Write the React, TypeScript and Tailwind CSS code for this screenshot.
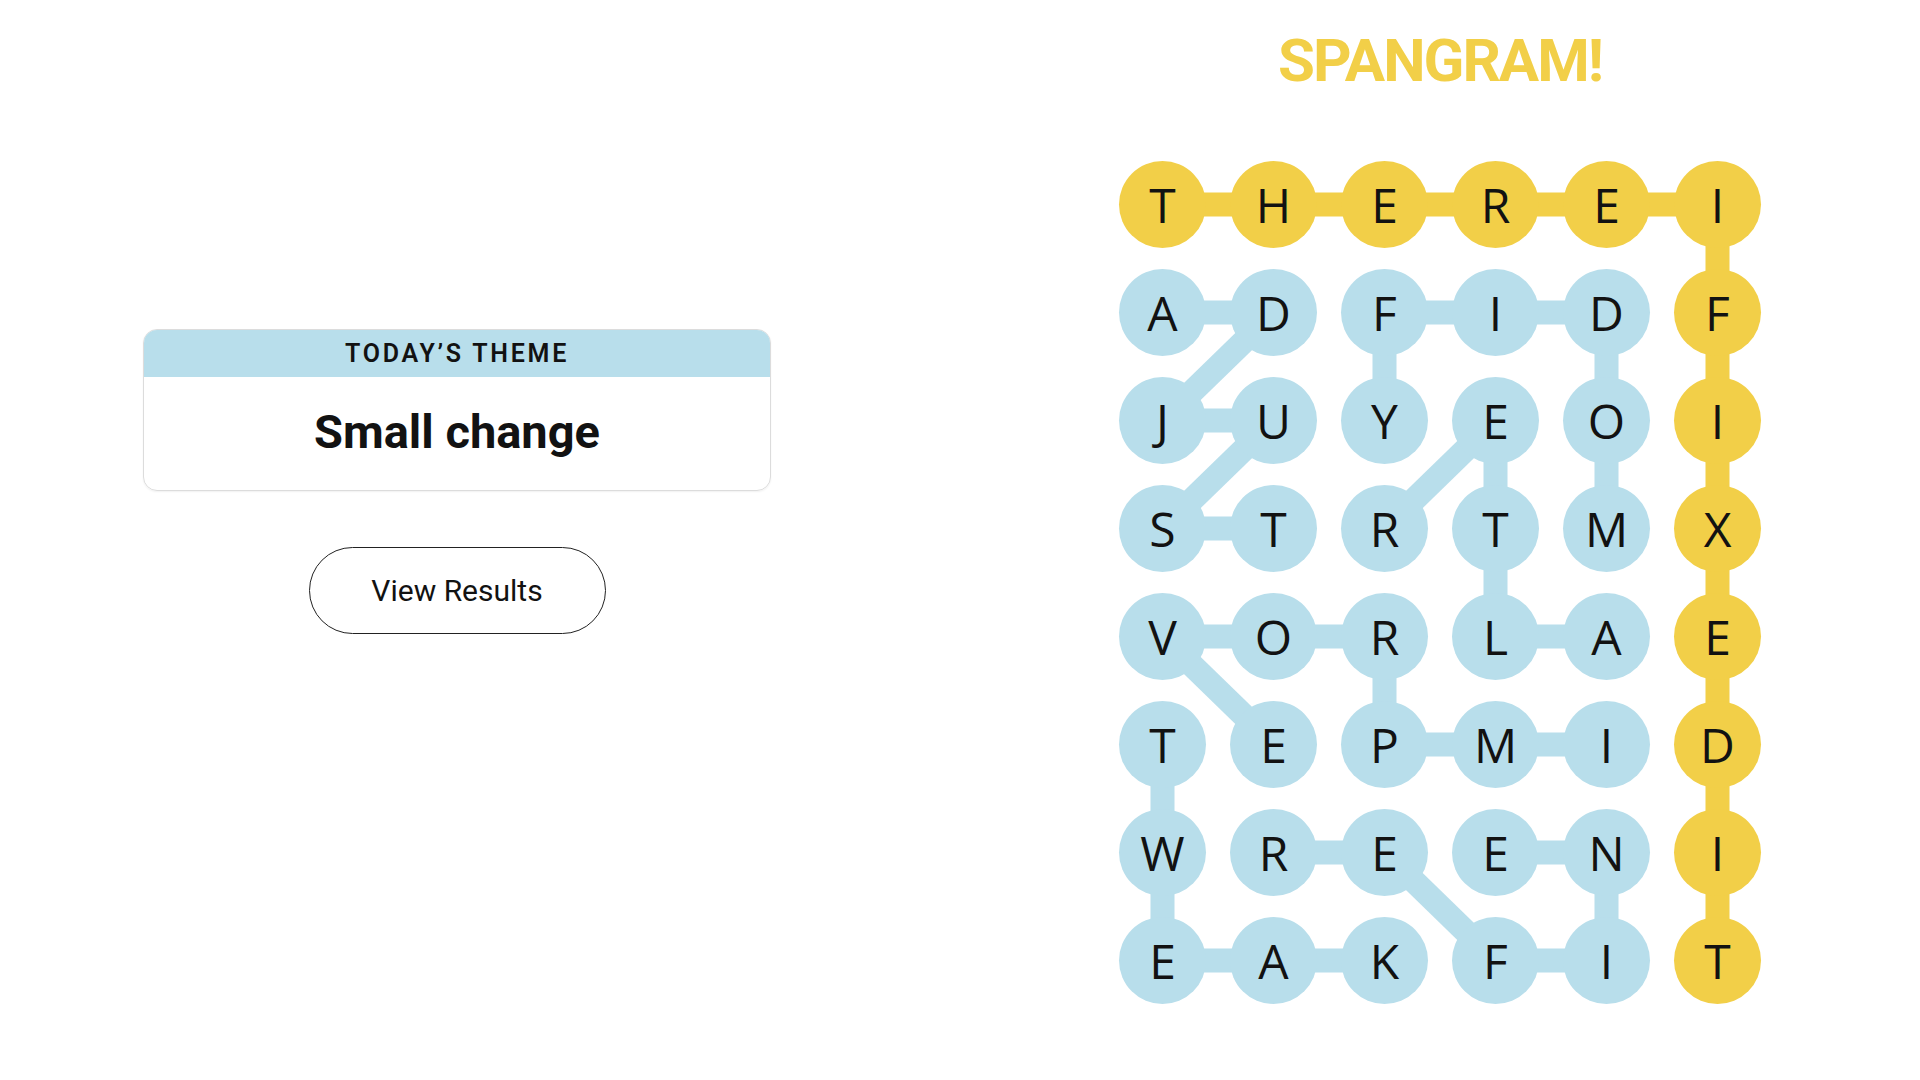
import React from 'react'

const ROWS = ['THEREI', 'ADFIDF', 'JUYEOI', 'STRTMX', 'VORLAE', 'TEPMID', 'WREENI', 'EAKFIT']

const CELL = 87
const PITCH_X = 111
const PITCH_Y = 108

const BLUE = '#b8deeb'
const YELLOW = '#f2cf48'

// [r1, c1, r2, c2]
const blueLinks: number[][] = [
  // adjust
  [1, 0, 1, 1], [1, 1, 2, 0], [2, 0, 2, 1], [2, 1, 3, 0], [3, 0, 3, 1],
  // modify
  [3, 4, 2, 4], [2, 4, 1, 4], [1, 4, 1, 3], [1, 3, 1, 2], [1, 2, 2, 2],
  // alter
  [4, 4, 4, 3], [4, 3, 3, 3], [3, 3, 2, 3], [2, 3, 3, 2],
  // tweak
  [5, 0, 6, 0], [6, 0, 7, 0], [7, 0, 7, 1], [7, 1, 7, 2],
  // improve
  [5, 4, 5, 3], [5, 3, 5, 2], [5, 2, 4, 2], [4, 2, 4, 1], [4, 1, 4, 0], [4, 0, 5, 1],
  // refine
  [6, 1, 6, 2], [6, 2, 7, 3], [7, 3, 7, 4], [7, 4, 6, 4], [6, 4, 6, 3],
]

const yellowLinks: number[][] = [
  [0, 0, 0, 1], [0, 1, 0, 2], [0, 2, 0, 3], [0, 3, 0, 4], [0, 4, 0, 5],
  [0, 5, 1, 5], [1, 5, 2, 5], [2, 5, 3, 5], [3, 5, 4, 5], [4, 5, 5, 5], [5, 5, 6, 5], [6, 5, 7, 5],
]

const cx = (c: number) => CELL / 2 + c * PITCH_X
const cy = (r: number) => CELL / 2 + r * PITCH_Y

function Links({ links, color }: { links: number[][]; color: string }) {
  return (
    <>
      {links.map(([r1, c1, r2, c2], i) => (
        <line
          key={i}
          x1={cx(c1)}
          y1={cy(r1)}
          x2={cx(c2)}
          y2={cy(r2)}
          stroke={color}
          strokeWidth={24}
        />
      ))}
    </>
  )
}

function Board() {
  return (
    <div className="relative">
      {/* connectors */}
      <svg className="absolute inset-0" width={642} height={843} aria-hidden="true">
        <Links links={blueLinks} color={BLUE} />
        <Links links={yellowLinks} color={YELLOW} />
      </svg>

      <div className="relative grid grid-cols-[repeat(6,87px)] gap-x-[24px] gap-y-[21px]">
        {ROWS.map((row, r) =>
          row.split('').map((ch, c) => {
            const spangram = r === 0 || c === 5
            return (
              <div
                key={`${r}-${c}`}
                className={`w-[87px] h-[87px] rounded-full flex items-center justify-center text-[48px] leading-none text-[#121212] ${
                  spangram ? 'bg-[#f2cf48]' : 'bg-[#b8deeb]'
                }`}
                style={{ fontFamily: '"Open Sans", "Noto Sans", sans-serif' }}
              >
                {ch}
              </div>
            )
          })
        )}
      </div>
    </div>
  )
}

export default function App() {
  return (
    <div
      className="w-[1920px] h-[1080px] bg-white flex overflow-hidden"
      style={{ fontFamily: 'Roboto, "Liberation Sans", sans-serif' }}
    >
      {/* left: theme + results */}
      <div className="w-[960px] pr-[46px] pt-[329px] flex flex-col items-center">
        <div className="w-[628px] rounded-[14px] border border-[#dcdcdc] overflow-hidden shadow-[0_1px_2px_rgba(0,0,0,0.06)]">
          <div className="h-[47px] bg-[#b8deeb] flex items-center justify-center">
            <span className="text-[25px] font-semibold tracking-[0.11em] text-[#121212] leading-none">
              TODAY’S THEME
            </span>
          </div>
          <div className="h-[113px] pb-[4px] flex items-center justify-center">
            <span className="text-[47px] font-bold text-[#121212] leading-none">Small change</span>
          </div>
        </div>

        <button className="mt-[56px] w-[297px] h-[87px] rounded-full border-[1.5px] border-[#222] bg-white text-[30px] text-[#121212] flex items-center justify-center">
          View Results
        </button>
      </div>

      {/* right: board */}
      <div className="w-[960px] pt-[31px] flex flex-col items-center">
        <h1 className="text-[60px] leading-none font-bold tracking-[-2px] text-[#f2cf48]">SPANGRAM!</h1>
        <div className="mt-[70px]">
          <Board />
        </div>
      </div>
    </div>
  )
}
